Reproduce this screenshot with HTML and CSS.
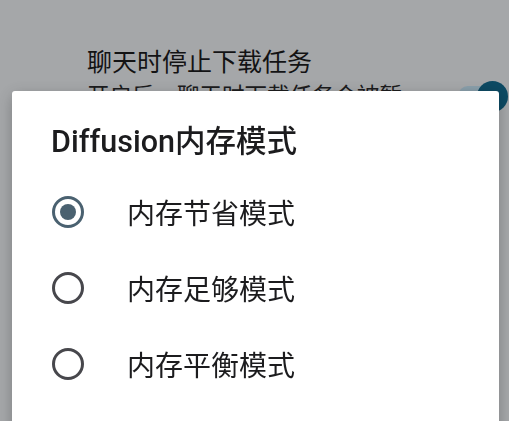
FILE: index.html
```html
<!DOCTYPE html>
<html lang="zh-CN">
<head>
  <meta charset="UTF-8"/>
  <meta name="viewport" content="width=device-width, initial-scale=1.0"/>
  <title>Diffusion内存模式</title>
  <link rel="stylesheet" href="styles.css">
</head>
<body>

  <!-- Settings page under the dialog -->
  <div class="settings">
    <div class="setting-row">
      <div class="setting-text">
        <div class="setting-title">聊天时停止下载任务</div>
        <div class="setting-desc">开启后，聊天时下载任务会被暂停</div>
      </div>
      <div class="switch on"><span class="thumb"></span></div>
    </div>
  </div>

  <!-- Scrim -->
  <div class="scrim"></div>

  <!-- Dialog -->
  <div class="dialog">
    <h2 class="dialog-title">Diffusion内存模式</h2>
    <div class="options">
      <label class="option">
        <span class="radio checked"></span>
        <span class="option-label">内存节省模式</span>
      </label>
      <label class="option">
        <span class="radio"></span>
        <span class="option-label">内存足够模式</span>
      </label>
      <label class="option">
        <span class="radio"></span>
        <span class="option-label">内存平衡模式</span>
      </label>
    </div>
  </div>

</body>
</html>
```

FILE: styles.css
```css
body {
  margin: 0;
  height: 100vh;
  overflow: hidden;
  font-family: Roboto, "Noto Sans CJK SC", sans-serif;
  background: #f4f7fa;
  color: #1c1c1e;
}

.settings {
  padding-top: 46px;
}

.setting-row {
  display: flex;
  align-items: flex-start;
  padding: 0 0 0 87px;
}

.setting-text {
  width: 320px;
}

.setting-title {
  font-size: 25px;
  line-height: 34px;
}

.setting-desc {
  font-size: 22.5px;
  line-height: 32px;
  color: #2a2a2c;
}

.switch {
  position: relative;
  width: 44px;
  height: 20px;
  margin: 40px 7px 0 auto;
  border-radius: 10px;
  background: #cbebfc;
}

.switch .thumb {
  position: absolute;
  left: 19px;
  top: -5px;
  width: 31px;
  height: 31px;
  border-radius: 50%;
  background: #136d92;
}

.scrim {
  position: fixed;
  inset: 0;
  background: rgba(0, 0, 0, 0.32);
}

.dialog {
  position: fixed;
  left: 12px;
  right: 10px;
  top: 91px;
  bottom: -40px;
  background: #fff;
  border-radius: 3px;
  padding: 32px 0 0 39px;
  box-shadow: 0 4px 16px rgba(0, 0, 0, 0.25);
}

.dialog-title {
  margin: 0;
  font-size: 30.5px;
  line-height: 38px;
  font-weight: 500;
  color: #1c1c1e;
}

.options {
  display: flex;
  flex-direction: column;
  margin-top: 13px;
}

.option {
  display: flex;
  align-items: center;
  height: 76px;
}

.radio {
  box-sizing: border-box;
  width: 32px;
  height: 32px;
  margin-left: 1px;
  border: 3px solid #47474c;
  border-radius: 50%;
  display: flex;
  align-items: center;
  justify-content: center;
}

.radio.checked {
  border-color: #4a6170;
}

.radio.checked::after {
  content: "";
  width: 16px;
  height: 16px;
  border-radius: 50%;
  background: #4a6170;
}

.option-label {
  margin-left: 43px;
  font-size: 28px;
  color: #1c1c1e;
}
```
